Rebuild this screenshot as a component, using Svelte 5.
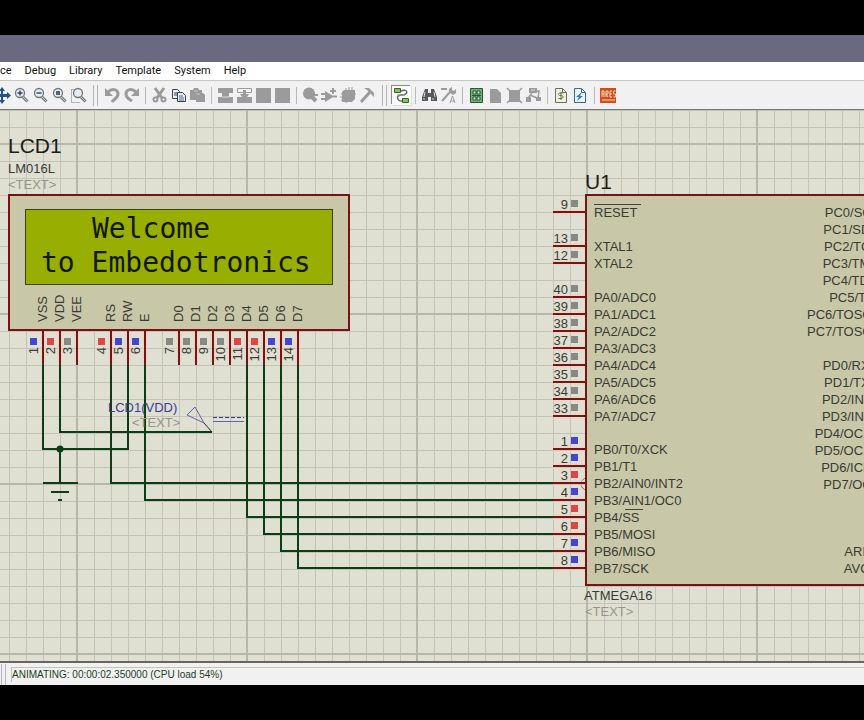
<script>
    const menus = ["ce", "Debug", "Library", "Template", "System", "Help"];

    const lens = (inner) =>
        `<path d="M11 11l4.500 4.500" stroke="#777b80" stroke-width="3"/><path d="M11 11l4 4" stroke="#c9ccd0"/><circle cx="8" cy="7" r="4.500" fill="#e4ecf0" stroke="#70787e" stroke-width="1.300"/>${inner}`;
    const dim = "#9b9b9b";

    const groups = [
        [
            ["Pan", `<path d="M9 1l3 4h-2v3h4V6l4 3.500-4 3.500v-2h-4v3h2l-3 4-3-4h2v-3H4v2L0 9.500 4 6v2h4V5H6z" fill="#254f8c"/>`],
            ["Zoom in", lens(`<path d="M5.500 7h5M8 4.500v5" stroke="#28436b" stroke-width="1.400"/>`)],
            ["Zoom out", lens(`<path d="M5.500 7h5" stroke="#28436b" stroke-width="1.400"/>`)],
            ["Zoom all", lens(`<path d="M6 5h4v4H6z" fill="#55636d"/>`)],
            ["Zoom area", `<path d="M2.500 3.500v13h9M2.500 3.500h3" stroke="#777" stroke-dasharray="1 1"/><g transform="translate(1 0)">${lens("")}</g>`],
        ],
        "grip",
        [
            ["Undo", `<path d="M5 6c4-4 10-3 10 2 0 4-4 5-6 8" stroke="${dim}" stroke-width="3"/><path d="M2 2v8h8z" fill="${dim}"/>`],
            ["Redo", `<path d="M14 6C10 2 4 3 4 8c0 4 3 5 6 7" stroke="${dim}" stroke-width="3"/><path d="M17 2v8H9z" fill="${dim}"/>`],
        ],
        "line",
        [
            ["Cut", `<path d="M5 2l7 10M14 2L7 12" stroke="${dim}" stroke-width="3"/><circle cx="5.500" cy="13.500" r="2" stroke="${dim}" stroke-width="2"/><circle cx="13.500" cy="13.500" r="2" stroke="${dim}" stroke-width="2"/>`],
            ["Copy", `<path d="M3.500 3.500h5l2 2v7h-7z" fill="#eef0f6" stroke="#3d4250"/><path d="M5 7h4M5 9h3" stroke="#3d4250"/><path d="M8.500 6.500h5l3 3v6h-8z" fill="#e8ebf4" stroke="#3d4250"/><path d="M10 10h4M10 12h5M10 14h5" stroke="#5e6a91"/>`],
            ["Paste", `<path d="M2 4h3l1-2h4l1 2h3v3h1l2 2v7H8v-2H2z" fill="${dim}"/><path d="M8 8h4M6 5h4" stroke="#c4c4c4"/>`],
        ],
        "line",
        [
            ["Block copy", `<path d="M2 2h15v5h-4v4h4v6H2v-6h4V7H2z" fill="${dim}"/><path d="M6 11h7" stroke="#ddd"/>`],
            ["Block move", `<path d="M2.500 2.500h14v4h-14z" stroke="${dim}"/><path d="M8 4h3v4h3l-2 3h5v6H2v-6h5L5 8h3z" fill="${dim}"/>`],
            ["Block rotate", `<path d="M2 2h15v15H2z" fill="${dim}"/>`],
            ["Block delete", `<path d="M2 2h15v15H2z" fill="${dim}"/>`],
        ],
        "line",
        [
            ["Pick parts", `<circle cx="8" cy="7.500" r="6" fill="${dim}"/><path d="M9 9l6 6" stroke="${dim}" stroke-width="4"/><path d="M17 9h-5" stroke="${dim}" stroke-width="2"/>`],
            ["Make device", `<path d="M5 5v11l9-5.500z" fill="${dim}"/><path d="M1 8h5M1 13h5M13 10.500h4M13 2v6M10 5h6" stroke="${dim}" stroke-width="2"/>`],
            ["Packaging tool", `<path d="M5 4h11v9l-3 3H3V6z" fill="${dim}"/><path d="M7 2v15M10 1v15M13 1v14M2 8h15M1 11h15M2 14h12" stroke="${dim}"/>`],
            ["Decompose", `<path d="M3 16L12 6" stroke="${dim}" stroke-width="3"/><path d="M6 2h5l5 5v4l-3-3-4-4z" fill="${dim}"/>`],
        ],
        "grip",
        [
            ["Wire autorouter", `<path d="M9 5c7-3 8 4 1 4s-5 6 0 6" stroke="#666" stroke-width="1.500"/><path d="M5 9h8" stroke="#999"/><path d="M2.500 2.500h6v4h-6zM10.500 12.500h6v4h-6z" fill="#88c060" stroke="#2f6b22"/>`, true],
        ],
        "line",
        [
            ["Search", `<path d="M5 3h3v4h3V3h3l3 8v4h-6v-4H8v4H2v-4z" fill="#555a5d"/><path d="M5 6l-1 5M14 6l1 5M4 12v2M13 12v2" stroke="#d5dadd"/>`],
            ["Property tool", `<path d="M2 3h6M3 15l8-9" stroke="${dim}" stroke-width="2"/><path d="M10 3l3-2v3l2 1 2-2v4l-3 2-4-3z" fill="${dim}"/><path d="M11 17l2.500-7 2.500 7M12 15h3" stroke="${dim}"/>`],
        ],
        "line",
        [
            ["Design explorer", `<path d="M3.500 2.500h12v14h-12z" fill="#77ad7e" stroke="#285a32"/><path d="M6 5h3v3H6zM10 5h3v3h-3zM6 11h3v3H6zM10 11h3v3h-3z" fill="#d6e8c8" stroke="#285a32"/><path d="M5 9.500h9" stroke="#285a32"/>`],
            ["New sheet", `<path d="M4 3h7l4 4v10H4z" fill="${dim}"/>`],
            ["Remove sheet", `<path d="M4 4h11v12H4z" fill="${dim}"/><path d="M2 2l15 15M17 2L2 17" stroke="${dim}" stroke-width="1.500"/>`],
            ["Exit to parent", `<path d="M5 2h8v5H5zM2 11h5v5H2zM12 11h5v4h-5z" fill="${dim}"/><path d="M8 7l-4 5M11 5h4l-1 8M6 9l7 3" stroke="${dim}" stroke-width="1.500"/><path d="M7 4h4" stroke="#ddd"/>`],
        ],
        "line",
        [
            ["Bill of materials", `<path d="M3.500 2.500h7l4 4v10h-11z" fill="#edf0df" stroke="#67705d"/><path d="M10.500 2.500v4h4" stroke="#67705d"/><path d="M11 7H8c-2 0-2 2.500 0 2.500h1.500c2 0 2 3 0 3H6.500M9 6v8" stroke="#61724e"/>`],
            ["Electrical check", `<path d="M3.500 2.500h7l4 4v10h-11z" fill="#e9f4fa" stroke="#456782"/><path d="M10.500 2.500v4h4" stroke="#456782"/><path d="M11 6L5 11h3l-2 4 6-5H9z" fill="#2b83bd"/>`],
        ],
        "line",
        [
            ["Netlist to ARES", `<path d="M1 2h16v15H1z" fill="#cf4e20"/><path d="M3 11V5h2v6M3 8h2M7 11V5h2v3H7l2 3M13 5h-2v6h2M11 8h2M16.500 5h-2v3h2v3h-2M3 14h13" stroke="#f7d8bd"/>`],
        ],
    ];

    // the sheet is scrolled by this much under the viewport
    const scrollY = 110;
    const pitch = 17;

    const levels = { hi: "#df4646", lo: "#4545cf", off: "#888884" };

    const lcdPins = [
        ["VSS", "lo"], ["VDD", "hi"], ["VEE", "off"], null,
        ["RS", "hi"], ["RW", "lo"], ["E", "lo"], null,
        ["D0", "off"], ["D1", "off"], ["D2", "off"], ["D3", "off"],
        ["D4", "hi"], ["D5", "hi"], ["D6", "lo"], ["D7", "lo"],
    ];
    let count = 0;
    const lcd = lcdPins
        .map((pin, i) => pin && { name: pin[0], level: pin[1], x: 43 + i * pitch, no: ++count })
        .filter(Boolean);

    const column = (y, first, step, names, state = "") =>
        names.map((name, i) => ({
            name,
            no: first + step * i,
            y: y + pitch * i,
            level: { h: "hi", l: "lo" }[state[i]] ?? "off",
        }));

    const mcuLeft = [
        ...column(212, 9, 0, ["RESET"]),
        ...column(246, 13, -1, ["XTAL1", "XTAL2"]),
        ...column(297, 40, -1, [0, 1, 2, 3, 4, 5, 6, 7].map((n) => `PA${n}/ADC${n}`)),
        ...column(449, 1, 1,
            ["PB0/T0/XCK", "PB1/T1", "PB2/AIN0/INT2", "PB3/AIN1/OC0", "PB4/SS", "PB5/MOSI", "PB6/MISO", "PB7/SCK"],
            "llhlhhll"
        ),
    ];
    const mcuRight = [
        ...column(212, 22, 1, ["PC0/SCL", "PC1/SDA", "PC2/TCK", "PC3/TMS", "PC4/TDO", "PC5/TDI", "PC6/TOSC1", "PC7/TOSC2"]),
        ...column(365, 14, 1, ["PD0/RXD", "PD1/TXD", "PD2/INT0", "PD3/INT1", "PD4/OC1B", "PD5/OC1A", "PD6/ICP1", "PD7/OC2"]),
        ...column(551, 32, -2, ["AREF", "AVCC"]),
    ];

    const wires = [
        "M43 365V449H128V365",
        "M60 365V432H212",
        "M111 365V483H553",
        "M145 365V500H553",
        "M247 365V517H553",
        "M264 365V534H553",
        "M281 365V551H553",
        "M298 365V568H553",
        "M60 449V483M43 483H78M51 492H69M58 500H62",
    ];
</script>

<div class="page">
    <header class="titlebar"></header>
    <nav class="menubar">
        {#each menus as menu}
            <button>{menu}</button>
        {/each}
    </nav>
    <div class="toolbar">
        {#each groups as group}
            {#if typeof group === "string"}
                <span class={group}></span>
            {:else}
                {#each group as [label, icon, pressed]}
                    <button class="tool" class:pressed aria-label={label}>
                        <svg viewBox="0 0 19 19" fill="none">{@html icon}</svg>
                    </button>
                {/each}
            {/if}
        {/each}
    </div>

    <main>
        <svg class="sheet">
            <defs>
                <pattern id="minor" x="9" y="8" width="17" height="17" patternUnits="userSpaceOnUse">
                    <path d="M0 .5H17M.5 0V17" stroke="#c3c4b7" />
                </pattern>
                <pattern id="major" x="76" y="143" width="170" height="170" patternUnits="userSpaceOnUse">
                    <path d="M0 1H170M1 0V170" stroke="#b7b8ac" stroke-width="2" />
                </pattern>
            </defs>
            <g transform="translate(0 {-scrollY})">
                <rect y={scrollY} width="100%" height="100%" fill="url(#minor)" />
                <rect y={scrollY} width="100%" height="100%" fill="url(#major)" />

                <!-- LCD1 -->
                <text class="ref" x="8" y="153">LCD1</text>
                <text x="8" y="173">LM016L</text>
                <text class="faint" x="8" y="189">&lt;TEXT&gt;</text>
                <rect class="body" x="9" y="195" width="340" height="135" />
                <rect class="glass" x="25.5" y="209.5" width="307" height="75" />
                <text class="dots" x="92" y="238">Welcome</text>
                <text class="dots" x="41" y="272">to Embedotronics</text>
                {#each lcd as pin}
                    <path class="halo" d="M{pin.x} 332V362" />
                    <path class="pin" d="M{pin.x} 330V365" />
                    <rect x={pin.x - 13} y="338" width="7" height="7" fill={levels[pin.level]} />
                    <text transform="translate({pin.x + 4} 322) rotate(-90)">{pin.name}</text>
                    <text class="end" transform="translate({pin.x - 5} 347) rotate(-90)">{pin.no}</text>
                {/each}

                {#each wires as d}
                    <path class="wire" {d} />
                {/each}
                <circle cx="60" cy="449" r="3.5" fill="#0d3d14" />

                <!-- power terminal -->
                <text class="net" x="108" y="412">LCD1(VDD)</text>
                <text class="faint" x="132" y="427">&lt;TEXT&gt;</text>
                <path d="M187 415L195 407L204 423ZM213 421.5H244" fill="none" stroke="#6262ad" />
                <path d="M204 423L212 432" stroke="#23233f" />
                <path d="M213 417.5H244" stroke="#38387c" stroke-dasharray="4 2" />

                <!-- U1 -->
                <text class="ref" x="585" y="189">U1</text>
                <circle cx="587" cy="484" r="6" fill="none" stroke="#78696a" />
                <rect class="body" x="586" y="195" width="301" height="390" />
                {#each mcuLeft as pin}
                    <path class="halo" d="M553 {pin.y}H585" />
                    <path class="pin" d="M553 {pin.y}H586" />
                    <rect x="571" y={pin.y - 12} width="7" height="7" fill={levels[pin.level]} />
                    <text class="end" x="568" y={pin.y - 3}>{pin.no}</text>
                    <text x="594" y={pin.y + 5}>{pin.name}</text>
                {/each}
                <path d="M594 204.5H641M625 509.5H643" stroke="#444438" />
                {#each mcuRight as pin}
                    <text class="end" x="879" y={pin.y + 5}>{pin.name}</text>
                {/each}
                <text x="584" y="600">ATMEGA16</text>
                <text class="faint" x="585" y="616">&lt;TEXT&gt;</text>
            </g>
        </svg>
    </main>

    <footer>
        <span class="grip"></span>
        <p>ANIMATING: 00:00:02.350000 (CPU load 54%)</p>
    </footer>
</div>

<style>
    :global(body) {
        background: #000;
    }
    .page {
        box-sizing: border-box;
        display: flex;
        flex-direction: column;
        height: 100vh;
        padding: 35px 0;
        overflow: hidden;
        font-family: Roboto, "Noto Sans", sans-serif;
    }
    .titlebar {
        height: 27px;
        flex: none;
        background: #696980;
    }
    button {
        padding: 0;
        border: 0;
        background: none;
        font: inherit;
        color: inherit;
    }
    .menubar {
        display: flex;
        flex: none;
        gap: 13px;
        height: 18px;
        background: #fff;
        color: #111;
        font-size: 11px;
        line-height: 18px;
    }
    .toolbar {
        box-sizing: border-box;
        display: flex;
        flex: none;
        align-items: center;
        height: 30px;
        border-top: 1px solid #c4c4c4;
        border-bottom: 1px solid #77776f;
        background: #f1f1f1;
    }
    .tool {
        display: block;
        box-sizing: border-box;
        flex: none;
        width: 19px;
        height: 19px;
    }
    .tool:first-child {
        margin-left: -7px;
    }
    .tool svg {
        display: block;
        width: 100%;
    }
    .pressed {
        background: #fafafa;
        box-shadow: -1px -1px #8b8b8b, 1px 1px #ddd;
    }
    .line {
        width: 1px;
        height: 17px;
        margin: 0 4px;
        background: #b9b9b9;
    }
    .grip {
        box-sizing: border-box;
        width: 5px;
        height: 21px;
        margin: 0 5px;
        border: solid #b5b5b5;
        border-width: 0 1px;
    }
    main {
        display: flex;
        flex: 1;
        min-height: 0;
        background: #dfe0d2;
    }
    .sheet {
        flex: 1;
        min-width: 0;
        overflow: hidden;
    }
    .sheet text {
        font: 13px "Liberation Sans", Arial, sans-serif;
        fill: #3a3a34;
        white-space: pre;
    }
    .sheet .ref {
        font-size: 21px;
        fill: #1c1c1a;
    }
    .sheet .faint {
        fill: #96968a;
    }
    .sheet .net {
        fill: #3a3a94;
    }
    .sheet .end {
        text-anchor: end;
    }
    .sheet .dots {
        font: 28px "DejaVu Sans Mono", monospace;
        fill: #121800;
    }
    .body {
        fill: #c8c8a8;
        stroke: #741414;
        stroke-width: 2;
    }
    .glass {
        fill: #98ae00;
        stroke: #3a4208;
    }
    .pin {
        stroke: #741414;
        stroke-width: 2;
    }
    .halo {
        stroke: #f5cfc4;
        stroke-width: 6;
        opacity: 0.5;
    }
    .wire {
        fill: none;
        stroke: #0d3d14;
        stroke-width: 2;
    }
    footer {
        box-sizing: border-box;
        display: flex;
        flex: none;
        align-items: center;
        height: 24px;
        border-top: 2px solid #66665f;
        background: #f1f1f1;
    }
    footer .grip {
        margin: 0 5px 0 1px;
    }
    footer p {
        flex: 1;
        margin: 0;
        border: solid #c2c2c2;
        border-width: 1px 0 0 1px;
        font: 10px/14px "Liberation Sans", Arial, sans-serif;
        color: #1d401d;
    }
</style>
